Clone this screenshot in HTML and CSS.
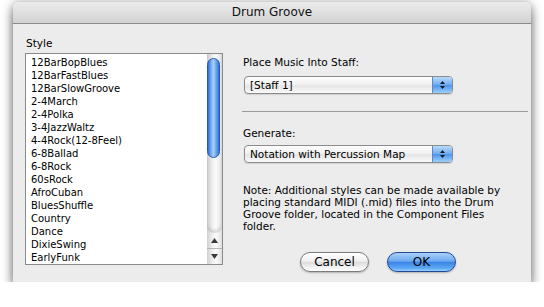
FILE: index.html
```html
<!DOCTYPE html>
<html lang="en">
  <head>
    <meta charset="UTF-8" />
    <meta name="viewport" content="width=device-width, initial-scale=1.0" />
    <title>Drum Groove</title>
    <link rel="stylesheet" href="styles.css">
  </head>
  <body>
    <div class="window">
      <div class="titlebar">Drum Groove</div>
      <div class="content">
        <div class="style-col">
          <div class="label">Style</div>
          <div class="listbox">
            <ul class="items">
              <li>12BarBopBlues</li>
              <li>12BarFastBlues</li>
              <li>12BarSlowGroove</li>
              <li>2-4March</li>
              <li>2-4Polka</li>
              <li>3-4JazzWaltz</li>
              <li>4-4Rock(12-8Feel)</li>
              <li>6-8Ballad</li>
              <li>6-8Rock</li>
              <li>60sRock</li>
              <li>AfroCuban</li>
              <li>BluesShuffle</li>
              <li>Country</li>
              <li>Dance</li>
              <li>DixieSwing</li>
              <li>EarlyFunk</li>
            </ul>
            <div class="scrollbar">
              <div class="track"><div class="thumb"></div></div>
              <div class="arrow">
                <svg width="7" height="5"><polygon points="3.5,0 7,5 0,5" /></svg>
              </div>
              <div class="arrow down">
                <svg width="7" height="5"><polygon points="0,0 7,0 3.5,5" /></svg>
              </div>
            </div>
          </div>
        </div>

        <div class="options">
          <div class="label">Place Music Into Staff:</div>
          <div class="popup">
            <span class="popup-value">[Staff 1]</span>
            <span class="popup-arrows">
              <svg width="5" height="3"><polygon points="2.5,0 5,3 0,3" /></svg>
              <svg width="5" height="3"><polygon points="0,0 5,0 2.5,3" /></svg>
            </span>
          </div>

          <hr class="separator" />

          <div class="label generate">Generate:</div>
          <div class="popup popup-small">
            <span class="popup-value">Notation with Percussion Map</span>
            <span class="popup-arrows">
              <svg width="5" height="3"><polygon points="2.5,0 5,3 0,3" /></svg>
              <svg width="5" height="3"><polygon points="0,0 5,0 2.5,3" /></svg>
            </span>
          </div>

          <p class="note">
            Note: Additional styles can be made available by placing standard
            MIDI (.mid) files into the Drum Groove folder, located in the
            Component Files folder.
          </p>

          <div class="buttons">
            <button class="btn">Cancel</button>
            <button class="btn btn-default">OK</button>
          </div>
        </div>
      </div>
    </div>
  </body>
</html>
```

FILE: styles.css
```css
body {
  margin: 0;
  background: #fff;
  font-family: "DejaVu Sans", sans-serif;
  font-size: 10.5px;
  color: #000;
}

.window {
  width: 518px;
  height: 280px;
  margin: 2px 0 0 13px;
  background: #ececec;
  border-radius: 5px 5px 0 0;
  box-shadow: 0 6px 12px rgba(0, 0, 0, 0.5), 0 0 8px rgba(0, 0, 0, 0.25);
  display: flex;
  flex-direction: column;
}

.titlebar {
  height: 21px;
  line-height: 21px;
  text-align: center;
  font-size: 12px;
  color: #111;
  background: linear-gradient(#ececec, #d2d2d2);
  border-bottom: 1px solid #8a8a8a;
  border-radius: 5px 5px 0 0;
}

.content {
  display: flex;
  padding: 13px 0 0 12px;
}

.label {
  line-height: 13px;
}

/* style list */

.style-col {
  width: 198px;
}

.style-col .label {
  line-height: 12px;
  margin-left: 1px;
}

.listbox {
  display: flex;
  height: 212px;
  margin-top: 4px;
  box-sizing: border-box;
  border: 1px solid #8a8a8a;
  background: #fff;
}

.items {
  flex: 1;
  margin: 0;
  padding: 2px 0 0 5px;
  list-style: none;
  font-size: 10px;
  line-height: 13px;
  overflow: hidden;
}

.scrollbar {
  width: 15px;
  display: flex;
  flex-direction: column;
  background: linear-gradient(to right, #d0d0d0, #f2f2f2 40%, #fbfbfb 60%, #e0e0e0);
}

.track {
  height: 175px;
  padding-top: 4px;
  border-radius: 0 0 7px 7px;
  box-shadow: inset 0 -3px 3px rgba(0, 0, 0, 0.12);
}

.thumb {
  width: 13px;
  height: 100px;
  box-sizing: border-box;
  border: 1px solid #2458b8;
  border-radius: 7px;
  background: linear-gradient(to right, #2f6dd4, #79b1f4 30%, #a9d0f9 50%, #6ea8ef 72%, #3273d8);
}

.arrow {
  height: 15px;
  display: flex;
  align-items: center;
  justify-content: center;
}

.arrow svg {
  fill: #3a3a3a;
}

.arrow.down {
  border-top: 1px solid #b4b4b4;
}

/* right side */

.options {
  width: 286px;
  margin-left: 20px;
  padding-top: 19px;
}

.popup {
  display: flex;
  width: 209px;
  height: 18px;
  margin: 7px 0 0 1px;
  box-sizing: border-box;
  border: 1px solid #8c8c8c;
  border-radius: 4px;
  background: linear-gradient(#fdfdfd, #f2f2f2 45%, #e4e4e4 55%, #fafafa);
  box-shadow: 0 1px 1px rgba(0, 0, 0, 0.12);
  overflow: hidden;
}

.popup-small {
  margin-top: 5px;
}

.popup-value {
  flex: 1;
  padding-left: 5px;
  line-height: 16px;
  white-space: nowrap;
}

.popup-arrows {
  width: 19px;
  display: flex;
  flex-direction: column;
  align-items: center;
  justify-content: center;
  gap: 2px;
  border-left: 1px solid #5d88c6;
  background: linear-gradient(#b9dbfb, #6eaaf0 50%, #4891ec 50%, #9dd0fa);
}

.popup-arrows svg {
  fill: #1a1a1a;
}

.separator {
  height: 1px;
  width: 286px;
  margin: 17px 0 0 -1px;
  border: 0;
  background: #9a9a9a;
}

.generate {
  margin-top: 15px;
}

.note {
  width: 272px;
  margin: 21px 0 0;
  line-height: 12px;
}

.buttons {
  display: flex;
  gap: 18px;
  margin-top: 20px;
  padding-left: 57px;
}

.btn {
  width: 69px;
  height: 20px;
  padding: 0;
  font-family: "DejaVu Sans", sans-serif;
  font-size: 12px;
  color: #000;
  border: 1px solid #7c7c7c;
  border-radius: 10px;
  background: linear-gradient(#ffffff, #f0f0f0 45%, #dcdcdc 52%, #f6f6f6 85%, #ffffff);
  box-shadow: 0 1px 2px rgba(0, 0, 0, 0.25);
}

.btn-default {
  border-color: #24479a;
  background: linear-gradient(#a9d2fa, #6ea9f0 45%, #3c85e6 52%, #5ea8f5 85%, #97d2fd);
}
```
